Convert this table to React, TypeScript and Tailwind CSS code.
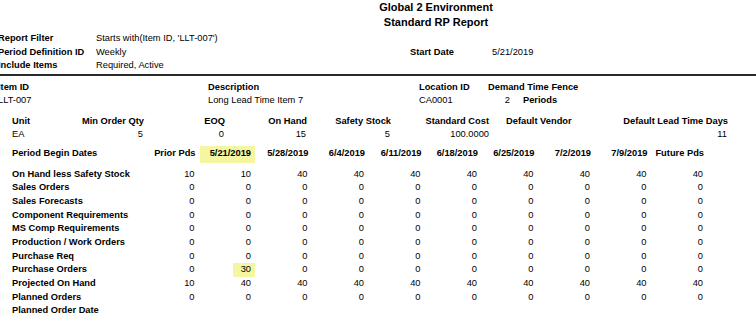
import React from 'react';

const periods = ['Prior Pds', '5/21/2019', '5/28/2019', '6/4/2019', '6/11/2019', '6/18/2019', '6/25/2019', '7/2/2019', '7/9/2019', 'Future Pds'];

const zeros = [0, 0, 0, 0, 0, 0, 0, 0, 0, 0];

const rows: { label: string; values: number[] | null }[] = [
  { label: 'On Hand less Safety Stock', values: [10, 10, 40, 40, 40, 40, 40, 40, 40, 40] },
  { label: 'Sales Orders', values: zeros },
  { label: 'Sales Forecasts', values: zeros },
  { label: 'Component Requirements', values: zeros },
  { label: 'MS Comp Requirements', values: zeros },
  { label: 'Production / Work Orders', values: zeros },
  { label: 'Purchase Req', values: zeros },
  { label: 'Purchase Orders', values: [0, 30, 0, 0, 0, 0, 0, 0, 0, 0] },
  { label: 'Projected On Hand', values: [10, 40, 40, 40, 40, 40, 40, 40, 40, 40] },
  { label: 'Planned Orders', values: zeros },
  { label: 'Planned Order Date', values: null },
];

const GRID = 'grid grid-cols-[127px_repeat(10,56.5px)]';

export default function App() {
  return (
    <div className="w-[756px] h-[334px] overflow-hidden bg-white text-black text-[9.3px] whitespace-nowrap" style={{ fontFamily: '"Liberation Sans", Arial, sans-serif' }}>
      {/* title */}
      <div className="flex flex-col items-center pl-[116px] font-bold text-[11px] leading-[15px]">
        <div>Global 2 Environment</div>
        <div>Standard RP Report</div>
      </div>

      {/* filters */}
      <div className="ml-[-2px] mt-[2px] leading-[13.5px]">
        <div className="flex">
          <div className="w-[98px] font-bold">Report Filter</div>
          <div>Starts with(Item ID, 'LLT-007')</div>
        </div>
        <div className="flex">
          <div className="w-[98px] font-bold">Period Definition ID</div>
          <div className="w-[314px]">Weekly</div>
          <div className="w-[82px] font-bold">Start Date</div>
          <div>5/21/2019</div>
        </div>
        <div className="flex">
          <div className="w-[98px] font-bold">Include Items</div>
          <div>Required, Active</div>
        </div>
      </div>
      <div className="mt-[1px] border-t-2 border-[#2a2a2a]" />

      {/* item */}
      <div className="ml-[-2px] mt-[5px] leading-[13.5px]">
        <div className="flex font-bold">
          <div className="w-[210px]">Item ID</div>
          <div className="w-[211px]">Description</div>
          <div className="w-[69px]">Location ID</div>
          <div>Demand Time Fence</div>
        </div>
        <div className="flex">
          <div className="w-[210px]">LLT-007</div>
          <div className="w-[211px]">Long Lead Time Item 7</div>
          <div className="w-[69px]">CA0001</div>
          <div className="flex">
            <span className="w-[22px] text-right">2</span>
            <span className="ml-[13px] font-bold">Periods</span>
          </div>
        </div>
      </div>

      <div className="pl-[12px] mt-[7px] leading-[13.5px]">
        <div className="flex font-bold">
          <div className="w-[62px]">Unit</div>
          <div className="w-[70px] text-right">Min Order Qty</div>
          <div className="w-[81px] text-right">EOQ</div>
          <div className="w-[82px] text-right">On Hand</div>
          <div className="w-[84px] text-right">Safety Stock</div>
          <div className="w-[98px] text-right">Standard Cost</div>
          <div className="w-[132px] pl-[17px]">Default Vendor</div>
          <div className="w-[107px] text-right">Default Lead Time Days</div>
        </div>
        <div className="flex">
          <div className="w-[62px]">EA</div>
          <div className="w-[70px] text-right pr-[1px]">5</div>
          <div className="w-[81px] text-right pr-[1px]">0</div>
          <div className="w-[82px] text-right pr-[1px]">15</div>
          <div className="w-[84px] text-right pr-[1px]">5</div>
          <div className="w-[98px] text-right">100.0000</div>
          <div className="w-[132px]" />
          <div className="w-[107px] text-right pr-[1px]">11</div>
        </div>
      </div>

      {/* periods grid */}
      <div className={`${GRID} pl-[12px] mt-[4px] h-[17px] font-bold items-center`}>
        <div>Period Begin Dates</div>
        {periods.map((p, i) =>
          i === 1 ? (
            <div key={p} className="flex justify-end h-full">
              <span className="flex items-center bg-[#f4f6a2] pl-[10px] pr-[4px] mr-[-3px]">{p}</span>
            </div>
          ) : (
            <div key={p} className="text-right">{p}</div>
          )
        )}
      </div>

      <div className="pl-[12px] mt-[5px]">
        {rows.map(r => (
          <div key={r.label} className={`${GRID} h-[13.7px] items-center`}>
            <div className="font-bold">{r.label}</div>
            {r.values &&
              r.values.map((v, i) =>
                r.label === 'Purchase Orders' && i === 1 ? (
                  <div key={i} className="flex justify-end h-full">
                    <span className="flex items-center bg-[#f4f6a2] pl-[8px] pr-[4px] mr-[-3px]">{v}</span>
                  </div>
                ) : (
                  <div key={i} className="text-right pr-[1px]">{v}</div>
                )
              )}
          </div>
        ))}
      </div>
    </div>
  );
}
